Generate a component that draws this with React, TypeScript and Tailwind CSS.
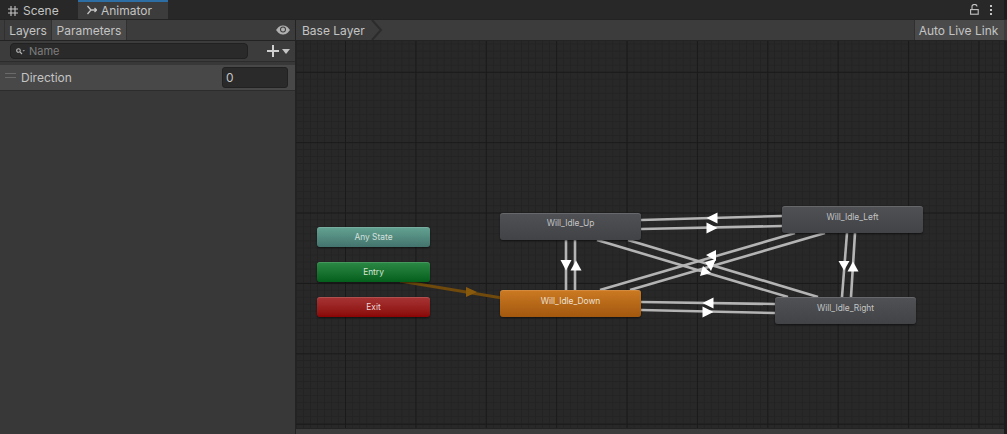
const lines = [
  "566,240 566,290",
  "575,240 575,290",
  "641,220 782,216",
  "641,229 782,226",
  "641,302 775,304",
  "641,310 775,313",
  "847,233 842,297",
  "855,233 851,297",
  "597,240 788,297",
  "628,240 818,297",
  "600,290 795,233",
  "630,290 825,233",
];

const arrows = [
  "560.5,260 571.5,260 566,270.5",
  "570.5,270.5 581.5,270.5 576,260.5",
  "717.5,212.5 717.5,223.5 706.5,218",
  "706.5,222.5 706.5,233.5 717.5,228",
  "713.5,297.5 713.5,308.5 702.5,303",
  "702.5,306.5 702.5,317.5 713.5,312",
  "838.5,261 849.5,261 844,270.5",
  "847.5,271.5 858.5,271.5 853,261.5",
  "706,255 716,250 716,261",
  "705,262 716,259 711,271",
  "700,276 703,266 711,273",
];

function StateNode({ label, className, box }: { label: string; className: string; box: string }) {
  return (
    <div
      className={`absolute flex items-center justify-center rounded-[3px] text-[8.4px] shadow-[0_1px_2px_#0008,inset_0_1px_0_#ffffff22] ${box} ${className}`}
    >
      {label}
    </div>
  );
}

export default function App() {
  return (
    <div className="w-[1007px] h-[434px] overflow-hidden flex flex-col bg-[#282828] text-[#c4c4c4] text-[12px] font-['Inter',sans-serif]">
      {/* window tabs */}
      <div className="h-[20px] flex items-stretch bg-[#282828] border-b border-[#232323] shrink-0">
        <div className="w-[78px] flex items-center gap-[5px] pl-[8px] pt-[2px]">
          <svg width="10" height="10" viewBox="0 0 10 10" fill="none" stroke="#c4c4c4" strokeWidth="1.1">
            <path d="M3 0 V10 M7 0 V10 M0 3 H10 M0 7 H10" />
          </svg>
          <span>Scene</span>
        </div>
        <div className="w-[90px] flex items-center gap-[4px] pl-[9px] pt-[1px] bg-[#3c3c3c] border-t-2 border-[#2d6ea5]">
          <svg className="-mt-[2px]" width="10" height="10" viewBox="0 0 10 10" fill="none" stroke="#c4c4c4" strokeWidth="1.3">
            <path d="M0.5 1 L4 5 L0.5 9 M4 5 H9.5 M7.5 3 L9.5 5 L7.5 7" />
          </svg>
          <span>Animator</span>
        </div>
        <div className="flex-1" />
        <div className="flex items-center gap-[11px] pr-[12px]">
          <svg width="9" height="11" viewBox="0 0 9 11" fill="none" stroke="#c4c4c4" strokeWidth="1.1">
            <path d="M2 5.5 V2.5 A2.4 2 0 0 1 7 2.5" />
            <rect x="0.6" y="5.6" width="7.6" height="4.6" />
          </svg>
          <div className="flex flex-col gap-[2px]">
            <span className="w-[2px] h-[2px] bg-[#c4c4c4]" />
            <span className="w-[2px] h-[2px] bg-[#c4c4c4]" />
            <span className="w-[2px] h-[2px] bg-[#c4c4c4]" />
          </div>
        </div>
        <div className="w-[3px] bg-[#1d1d1d]" />
      </div>

      <div className="flex-1 flex min-h-0">
        {/* left panel */}
        <div className="w-[296px] shrink-0 flex flex-col bg-[#383838] border-r border-[#232323]">
          <div className="h-[21px] flex items-stretch bg-[#3c3c3c] border-b border-[#232323] shrink-0">
            <div className="w-[4px]" />
            <div className="w-[48px] flex items-center justify-center border-x border-[#303030] pt-[1px]">Layers</div>
            <div className="w-[75px] flex items-center justify-center bg-[#4a4a4a] border-r border-[#303030] pt-[1px]">Parameters</div>
            <div className="flex-1 flex items-center justify-end pr-[5px]">
              <svg width="14" height="10" viewBox="0 0 14 10">
                <path d="M0 5 C3 1 5 0.5 7 0.5 C9 0.5 11 1 14 5 C11 9 9 9.5 7 9.5 C5 9.5 3 9 0 5 Z" fill="#b0b0b0" />
                <circle cx="7" cy="4.6" r="3" fill="#3c3c3c" />
                <circle cx="7" cy="4.6" r="2" fill="#b0b0b0" />
              </svg>
            </div>
          </div>
          <div className="h-[21px] flex items-center bg-[#3c3c3c] border-b border-[#2c2c2c] shrink-0">
            <div className="ml-[10px] w-[238px] h-[16px] flex items-center gap-[4px] pl-[5px] rounded-[4px] bg-[#2a2a2a] border border-[#212121] text-[#7e7e7e] text-[11px]">
              <svg width="9" height="7" viewBox="0 0 9 7" fill="none" stroke="#b8b8b8" strokeWidth="1.1">
                <circle cx="2.5" cy="2.5" r="1.8" />
                <path d="M4 4 L6 6" />
                <path d="M6.5 2.2 H9 L7.75 3.6 Z" fill="#b8b8b8" stroke="none" />
              </svg>
              <span>Name</span>
            </div>
            <div className="ml-[19px] flex items-center gap-[3px]">
              <span className="relative w-[12px] h-[12px]">
                <span className="absolute left-0 top-[5px] w-[12px] h-[2px] bg-[#d0d0d0]" />
                <span className="absolute left-[5px] top-0 w-[2px] h-[12px] bg-[#d0d0d0]" />
              </span>
              <span className="w-0 h-0 border-x-[4px] border-x-transparent border-t-[5px] border-t-[#c4c4c4]" />
            </div>
          </div>
          <div className="mt-[3px] h-[26px] flex items-center bg-[#484848] border-b border-[#2c2c2c] shrink-0">
            <div className="ml-[5px] w-[11px] flex flex-col gap-[3px] -mt-[5px]">
              <span className="h-px bg-[#6a6a6a]" />
              <span className="h-px bg-[#6a6a6a]" />
            </div>
            <span className="ml-[5px]">Direction</span>
            <div className="ml-auto mr-[7px] w-[66px] h-[21px] flex items-center pl-[3px] rounded-[3px] bg-[#2a2a2a] border border-[#212121]">0</div>
          </div>
          <div className="flex-1" />
        </div>

        {/* graph area */}
        <div className="flex-1 min-w-0 flex flex-col">
          <div className="h-[21px] flex items-stretch bg-[#3c3c3c] border-b border-[#232323] shrink-0">
            <div className="relative flex items-center pl-[6px] pt-[1px] w-[90px]">
              Base Layer
              <svg className="absolute right-[3px] top-0" width="12" height="20" viewBox="0 0 12 20" fill="none" stroke="#2c2c2c" strokeWidth="2">
                <path d="M1 0 L10 10 L1 20" />
              </svg>
            </div>
            <div className="flex-1" />
            <div className="w-[90px] mr-[3px] pr-[2px] pt-[1px] flex items-center justify-center bg-[#4a4a4a] border-l border-[#303030]">
              Auto Live Link
            </div>
          </div>
          <div className="relative flex-1 min-h-0 bg-[#282828] bg-[linear-gradient(#1a1a1a_1px,transparent_1px),linear-gradient(90deg,#1a1a1a_1px,transparent_1px),linear-gradient(#232323_1px,transparent_1px),linear-gradient(90deg,#232323_1px,transparent_1px)] bg-[size:70.4px_70.4px,70.4px_70.4px,7.04px_7.04px,7.04px_7.04px] bg-[position:0_30.8px,49px_0,0_2.6px,0_0]">
            <svg className="absolute -left-[296px] -top-[41px] pointer-events-none" width="1007" height="434" viewBox="0 0 1007 434">
              <line x1="400" y1="281" x2="502" y2="298" stroke="#6f4a0c" strokeWidth="3" />
              <polygon points="466,287 466,297 477,292" fill="#8a5a0c" />
              {lines.map((l) => {
                const [a, b] = l.split(" ");
                const [x1, y1] = a.split(",");
                const [x2, y2] = b.split(",");
                return <line key={l} x1={x1} y1={y1} x2={x2} y2={y2} stroke="#b4b4b4" strokeWidth="2.6" />;
              })}
              {arrows.map((p) => (
                <polygon key={p} points={p} fill="#ffffff" />
              ))}
            </svg>
            <div className="absolute left-0 right-0 top-0 bottom-0 -translate-x-[296px] -translate-y-[41px] w-[1007px] h-[434px]">
              <StateNode label="Any State" box="left-[317px] top-[227px] w-[113px] h-[20px]" className="bg-linear-to-b from-[#64a393] to-[#43746d] text-[#d4e0dc]" />
              <StateNode label="Entry" box="left-[317px] top-[262px] w-[113px] h-[20px]" className="bg-linear-to-b from-[#2a8a45] to-[#045f1c] text-[#d6e6da]" />
              <StateNode label="Exit" box="left-[317px] top-[297px] w-[113px] h-[20px]" className="bg-linear-to-b from-[#a63434] to-[#8a0505] text-[#ecd8d8]" />
              <StateNode label="Will_Idle_Up" box="left-[500px] top-[213px] w-[141px] h-[27px]" className="bg-linear-to-b from-[#4f5155] to-[#414347] text-[#c4c4c4] pb-[6px]" />
              <StateNode label="Will_Idle_Down" box="left-[500px] top-[290px] w-[141px] h-[27px]" className="bg-linear-to-b from-[#cc7a22] to-[#a2580e] text-[#ece0d4] pb-[5px]" />
              <StateNode label="Will_Idle_Left" box="left-[782px] top-[206px] w-[141px] h-[27px]" className="bg-linear-to-b from-[#4f5155] to-[#414347] text-[#c4c4c4] pb-[5px]" />
              <StateNode label="Will_Idle_Right" box="left-[775px] top-[297px] w-[141px] h-[27px]" className="bg-linear-to-b from-[#4f5155] to-[#414347] text-[#c4c4c4] pb-[5px]" />
            </div>
            <div className="absolute left-0 right-0 bottom-0 h-[6px] bg-[#3c3c3c] border-t border-[#232323]" />
            <div className="absolute right-0 top-0 bottom-0 w-[3px] bg-[#1d1d1d]" />
          </div>
        </div>
      </div>
    </div>
  );
}
